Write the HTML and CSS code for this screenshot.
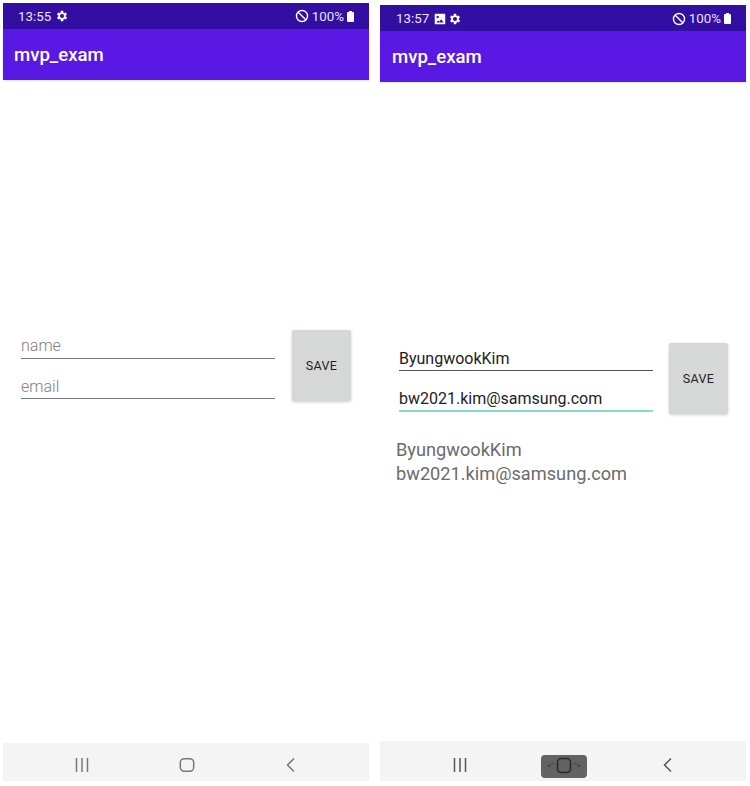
FILE: index.html
```html
<!DOCTYPE html>
<html lang="en">
<head>
  <meta charset="UTF-8">
  <title>mvp_exam</title>
  <link rel="stylesheet" href="styles.css">
</head>
<body>

<div class="screens">
  <!-- empty form -->
  <div class="phone phone-left">
    <div class="status-bar">
      <span class="clock">13:55</span>
      <svg class="status-icon" viewBox="1 0 24 24"><path d="M19.400 13a7.500 7.500 0 0 0 0-2l2.100-1.600-2-3.500-2.500 1a7.500 7.500 0 0 0-1.700-1L15 3.200h-4l-.4 2.700a7.500 7.500 0 0 0-1.700 1l-2.500-1-2 3.500L6.600 11a7.500 7.500 0 0 0 0 2l-2.100 1.600 2 3.500 2.500-1a7.500 7.500 0 0 0 1.700 1l.4 2.700h4l.4-2.700a7.500 7.500 0 0 0 1.700-1l2.500 1 2-3.500zM13 15.500a3.500 3.500 0 1 1 0-7 3.500 3.500 0 0 1 0 7z" fill-rule="evenodd"/></svg>
      <span class="spacer"></span>
      <svg class="status-icon dnd" viewBox="0 0 24 24"><circle cx="12" cy="12" r="9.500" fill="none" stroke="#fff" stroke-width="2.400"/><path d="M5.500 5.500l13 13" stroke="#fff" stroke-width="2.400"/></svg>
      <span class="battery-text">100%</span>
      <span class="battery"></span>
    </div>
    <div class="app-bar">mvp_exam</div>
    <div class="content">
      <div class="form-row">
        <div class="fields">
          <div class="field placeholder">name</div>
          <div class="field placeholder email-hint">email</div>
        </div>
        <button class="save-btn">SAVE</button>
      </div>
    </div>
    <div class="nav-bar">
      <svg class="nav-icon" viewBox="0 0 16 16"><path d="M2.500 1v14M8 1v14M13.500 1v14" fill="none" stroke="#777" stroke-width="1.500"/></svg>
      <svg class="nav-icon" viewBox="0 0 16 16"><rect x="1.300" y="1.700" width="13.400" height="12.600" rx="4" fill="none" stroke="#777" stroke-width="1.500"/></svg>
      <svg class="nav-icon" viewBox="0 0 16 16"><path d="M11 1.500L4.500 8l6.500 6.500" fill="none" stroke="#777" stroke-width="1.500"/></svg>
    </div>
  </div>

  <!-- filled in, after save -->
  <div class="phone phone-right">
    <div class="status-bar">
      <span class="clock">13:57</span>
      <svg class="status-icon icon-image" viewBox="0 0 24 24"><path d="M3 4.500A1.500 1.500 0 0 1 4.500 3h15A1.500 1.500 0 0 1 21 4.500v15a1.500 1.500 0 0 1-1.500 1.500h-15A1.500 1.500 0 0 1 3 19.500zM6 18h12l-4-5.500-3 4-2-2.500zM8 10.500a2 2 0 1 0 0-4 2 2 0 0 0 0 4z" fill-rule="evenodd"/></svg>
      <svg class="status-icon" viewBox="1 0 24 24"><path d="M19.400 13a7.500 7.500 0 0 0 0-2l2.100-1.600-2-3.500-2.500 1a7.500 7.500 0 0 0-1.700-1L15 3.200h-4l-.4 2.700a7.500 7.500 0 0 0-1.700 1l-2.500-1-2 3.500L6.600 11a7.500 7.500 0 0 0 0 2l-2.100 1.600 2 3.500 2.500-1a7.500 7.500 0 0 0 1.700 1l.4 2.700h4l.4-2.700a7.500 7.500 0 0 0 1.700-1l2.500 1 2-3.500zM13 15.500a3.500 3.500 0 1 1 0-7 3.500 3.500 0 0 1 0 7z" fill-rule="evenodd"/></svg>
      <span class="spacer"></span>
      <svg class="status-icon dnd" viewBox="0 0 24 24"><circle cx="12" cy="12" r="9.500" fill="none" stroke="#fff" stroke-width="2.400"/><path d="M5.500 5.500l13 13" stroke="#fff" stroke-width="2.400"/></svg>
      <span class="battery-text">100%</span>
      <span class="battery"></span>
    </div>
    <div class="app-bar">mvp_exam</div>
    <div class="content">
      <div class="form-row">
        <div class="fields">
          <div class="field">ByungwookKim</div>
          <div class="field focused">bw2021.kim@samsung.com</div>
        </div>
        <button class="save-btn">SAVE</button>
      </div>
      <div class="output">
        <div>ByungwookKim</div>
        <div>bw2021.kim@samsung.com</div>
      </div>
    </div>
    <div class="nav-bar">
      <svg class="nav-icon" viewBox="0 0 16 16"><path d="M2.500 1v14M8 1v14M13.500 1v14" fill="none" stroke="#555" stroke-width="1.500"/></svg>
      <div class="home-pressed">
        <svg class="nav-home" viewBox="0 0 44 22"><rect x="15.500" y="3.500" width="13" height="14" rx="4" fill="none" stroke="#2b2b2b" stroke-width="1.600"/><path d="M12 8.500H9.500Q7 8.500 7 11.500M5 10l2 2 2-2M32 8.500h2.500q2.500 0 2.500 3M35 10l2 2 2-2" fill="none" stroke="#444" stroke-width="1"/></svg>
      </div>
      <svg class="nav-icon" viewBox="0 0 16 16"><path d="M11 1.500L4.500 8l6.500 6.500" fill="none" stroke="#555" stroke-width="1.500"/></svg>
    </div>
  </div>
</div>

</body>
</html>
```

FILE: styles.css
```css
html, body {
  margin: 0;
  padding: 0;
  background-color: #fff;
}
body {
  font-family: Roboto, "Liberation Sans", sans-serif;
  width: 750px;
  height: 786px;
  overflow: hidden;
}
.screens {
  display: flex;
  gap: 11px;
  padding-left: 3px;
}
.phone {
  width: 366px;
  height: 781px;
  display: flex;
  flex-direction: column;
  box-sizing: border-box;
}
.phone-left {
  padding-top: 3px;
}
.phone-right {
  padding-top: 5px;
}
.status-bar {
  height: 26px;
  box-sizing: border-box;
  background-color: #330ea3;
  color: #e9e4f7;
  display: flex;
  align-items: center;
  padding: 0 15px;
  font-size: 13.300px;
}
.phone-right .status-bar {
  padding-left: 16px;
  padding-top: 1px;
}
.clock {
  margin-right: 4px;
}
.status-icon {
  width: 14px;
  height: 14px;
  fill: #fff;
}
.icon-image {
  margin-right: 1px;
}
.dnd {
  margin-right: 3px;
}
.spacer {
  flex: 1;
}
.battery {
  width: 7px;
  height: 10px;
  margin: 1px 0 0 3px;
  background-color: #fff;
  border-radius: 1px;
  position: relative;
}
.battery::before {
  content: "";
  position: absolute;
  left: 2px;
  top: -1px;
  width: 3px;
  height: 1px;
  background-color: #fff;
}
.app-bar {
  height: 51px;
  box-sizing: border-box;
  background-color: #5a18e4;
  color: #fff;
  font-size: 18.600px;
  font-weight: 500;
  display: flex;
  align-items: center;
  padding: 0 11px;
  box-shadow: 0 1px 2px rgba(0,0,0,0.12);
}
.phone-right .app-bar {
  padding-left: 12px;
}
.content {
  flex: 1;
}
.phone-left .content {
  padding-top: 250px;
}
.phone-right .content {
  padding-top: 261px;
}
.form-row {
  display: flex;
  gap: 17px;
  padding-left: 18px;
}
.fields {
  width: 254px;
  padding-top: 4px;
  display: flex;
  flex-direction: column;
  gap: 15px;
}
.phone-right .fields {
  padding-top: 3px;
}
.phone-right .form-row {
  padding-left: 19px;
  gap: 16px;
}
.field {
  height: 25px;
  box-sizing: border-box;
  font-size: 16px;
  line-height: 20px;
  padding-top: 3px;
  color: #222;
  border-bottom: 1px solid #555;
}
.placeholder {
  padding-top: 2px;
  font-weight: 300;
  color: #808080;
  border-bottom-color: #777;
}
.email-hint {
  padding-top: 3px;
}
.focused {
  border-bottom: 2px solid #84dccb;
  height: 26px;
}
.save-btn {
  width: 59px;
  height: 71px;
  border: none;
  border-radius: 2px;
  background-color: #d6d7d7;
  color: #222;
  font-family: inherit;
  font-size: 12.500px;
  font-weight: 400;
  letter-spacing: 0.3px;
  padding: 0;
  box-shadow: 0 1px 3px rgba(0,0,0,0.2);
}
.output {
  margin: 24px 0 0 16px;
  font-size: 18.200px;
  line-height: 24px;
  color: #6b6b6b;
}
.nav-bar {
  height: 38px;
  box-sizing: border-box;
  background-color: #f4f4f4;
  display: flex;
  align-items: center;
  justify-content: space-between;
  padding: 6px 70px 0 71px;
}
.phone-right .nav-bar {
  height: 40px;
  padding: 8px 70px 0 72px;
}
.nav-icon {
  width: 16px;
  height: 16px;
}
.home-pressed {
  width: 46px;
  height: 23px;
  margin-top: 2px;
  background-color: #636363;
  border-radius: 4px;
  display: flex;
  align-items: center;
  justify-content: center;
}
.nav-home {
  width: 44px;
  height: 22px;
}
```
